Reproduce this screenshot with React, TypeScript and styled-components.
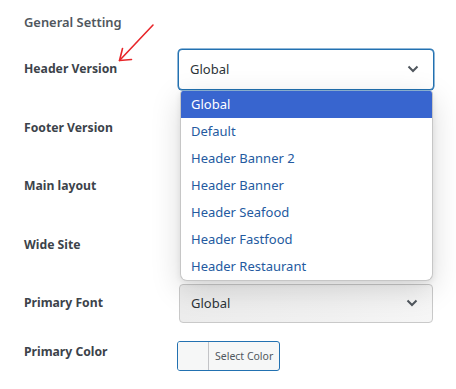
import React from "react";
import styled, { createGlobalStyle } from "styled-components";

const Global = createGlobalStyle`
  html, body { margin: 0; padding: 0; background: #ffffff; }
  body { font-family: "Noto Sans", "Open Sans", sans-serif; }
`;

const Page = styled.div`
  position: relative;
  width: 456px;
  height: 389px;
  overflow: hidden;
  background: #ffffff;
  box-sizing: border-box;
  padding: 12px 0 0 24px;
`;

const Title = styled.h2`
  margin: 0 0 17px 0;
  font-size: 12.9px;
  line-height: 20px;
  font-weight: 600;
  color: #50575e;
`;

const Form = styled.div`
  display: flex;
  flex-direction: column;
  gap: 18.5px;
`;

const Row = styled.div<{ $top?: boolean }>`
  display: flex;
  align-items: ${(p) => (p.$top ? "flex-start" : "center")};
  height: ${(p) => (p.$top ? "30px" : "40px")};
  position: relative;
`;

const Label = styled.div`
  width: 154px;
  flex: none;
  font-size: 12.2px;
  line-height: 20px;
  font-weight: 700;
  color: #3c434a;
`;

const SelectBox = styled.div<{ $focus?: boolean; $muted?: boolean; $covered?: boolean }>`
  position: relative;
  box-sizing: border-box;
  width: ${(p) => (p.$focus ? "256px" : "254px")};
  margin-left: ${(p) => (p.$focus ? "0" : "1px")};
  height: ${(p) => (p.$focus ? "41px" : "39px")};
  border: 1px solid ${(p) => (p.$focus ? "#2271b1" : "#c9c9c9")};
  border-radius: 4px;
  background: ${(p) => (p.$muted ? "linear-gradient(90deg, #ececec, #f1f1f1 60%, #f6f6f6)" : "#ffffff")};
  display: flex;
  align-items: center;
  padding: 0 14px 0 11px;
  font-size: 13px;
  color: #2c3338;
  visibility: ${(p) => (p.$covered ? "hidden" : "visible")};
  ${(p) => (p.$focus ? "box-shadow: 0 0 0 0.5px #2271b1;" : "")}
`;

const Value = styled.span`
  flex: 1;
  line-height: 20px;
`;

const Chevron = styled.svg`
  width: 12px;
  height: 8px;
  flex: none;
`;

const Popup = styled.ul`
  position: absolute;
  left: 156px;
  top: 42px;
  width: 253px;
  margin: 0;
  padding: 0;
  list-style: none;
  box-sizing: border-box;
  background: #ffffff;
  border: 1px solid #c6c6c6;
  border-top: none;
  border-radius: 3px 3px 7px 7px;
  box-shadow: 0 8px 30px rgba(0, 0, 0, 0.15), 0 2px 6px rgba(0, 0, 0, 0.08);
  overflow: hidden;
  z-index: 5;
`;

const Option = styled.li<{ $active?: boolean }>`
  height: 27px;
  line-height: 27px;
  padding-left: 10px;
  font-size: 13px;
  color: ${(p) => (p.$active ? "#ffffff" : "#245aa0")};
  background: ${(p) => (p.$active ? "#3865cf" : "transparent")};
`;

const ColorButton = styled.div`
  box-sizing: border-box;
  display: flex;
  height: 30px;
  width: 103px;
  margin-left: -1px;
  margin-top: -1px;
  border: 1px solid #2271b1;
  border-radius: 3px;
  overflow: hidden;
  background: #f6f7f7;
`;

const Swatch = styled.span`
  width: 30px;
  flex: none;
  background: #f6f7f7;
  border-right: 1px solid #c3c4c7;
`;

const ColorText = styled.span`
  flex: 1;
  font-size: 10.5px;
  line-height: 28px;
  color: #50575e;
  padding-left: 6px;
`;

const Arrow = styled.svg`
  position: absolute;
  left: 114px;
  top: 22px;
  width: 44px;
  height: 44px;
  z-index: 6;
`;

const ChevronIcon = () => (
  <Chevron viewBox="0 0 12 8">
    <path d="M1.5 1.5 L6 6 L10.5 1.5" fill="none" stroke="#50575e" strokeWidth="2" />
  </Chevron>
);

const options = [
  "Global",
  "Default",
  "Header Banner 2",
  "Header Banner",
  "Header Seafood",
  "Header Fastfood",
  "Header Restaurant",
];

const coveredRows = ["Footer Version", "Main layout", "Wide Site"];

export default function App() {
  return (
    <Page>
      <Global />
      <Title>General Setting</Title>
      <Arrow viewBox="114 22 44 44">
        <path d="M153 25 L119.5 60.5" stroke="#e8262a" strokeWidth="1.6" fill="none" strokeLinecap="round" />
        <path d="M122.5 48.5 L119.5 60.5 L131.5 59.5" stroke="#e8262a" strokeWidth="1.6" fill="none" strokeLinecap="round" strokeLinejoin="round" />
      </Arrow>
      <Form>
        <Row>
          <Label>Header Version</Label>
          <SelectBox $focus>
            <Value>Global</Value>
            <ChevronIcon />
          </SelectBox>
          <Popup>
            {options.map((o, i) => (
              <Option key={o} $active={i === 0}>
                {o}
              </Option>
            ))}
          </Popup>
        </Row>
        {coveredRows.map((r) => (
          <Row key={r}>
            <Label>{r}</Label>
            <SelectBox $covered>
              <Value>Global</Value>
              <ChevronIcon />
            </SelectBox>
          </Row>
        ))}
        <Row>
          <Label>Primary Font</Label>
          <SelectBox $muted>
            <Value>Global</Value>
            <ChevronIcon />
          </SelectBox>
        </Row>
        <Row $top>
          <Label>Primary Color</Label>
          <ColorButton>
            <Swatch />
            <ColorText>Select Color</ColorText>
          </ColorButton>
        </Row>
      </Form>
    </Page>
  );
}
